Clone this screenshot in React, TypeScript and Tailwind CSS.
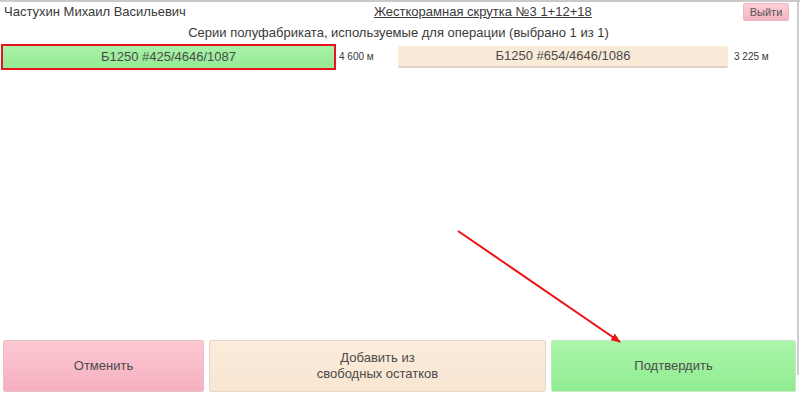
export default function App() {
  return (
    <div className="relative flex h-[395px] w-[800px] overflow-hidden border-t-2 border-[#c9c9c9] bg-white font-['Liberation_Sans',Arial,sans-serif] text-[#3a3a3a]">
      <div className="flex flex-1 flex-col">
        <div className="flex h-[19px] items-center">
          <div className="w-[374px] pl-[4px] text-[13px]">Частухин Михаил Васильевич</div>
          <div className="text-[13px] underline">Жесткорамная скрутка №3 1+12+18</div>
          <div className="flex-1" />
          <button className="mr-[8px] mt-[1px] h-[18px] w-[46px] rounded-[2px] border border-[#edb6c0] bg-gradient-to-b from-[#fccfd8] to-[#f5b3c0] text-[11px] text-[#555]">
            Выйти
          </button>
        </div>
        <div className="mt-[2px] text-center text-[13px]">
          Серии полуфабриката, используемые для операции (выбрано 1 из 1)
        </div>
        <div className="mt-[1px] flex items-center">
          <div className="ml-[1px] flex h-[26px] w-[335px] items-center justify-center border-2 border-[#e8141c] bg-gradient-to-b from-[#a8f2a8] to-[#94ea94] text-[13px] text-[#4a4a4a]">
            Б1250 #425/4646/1087
          </div>
          <div className="ml-[3px] w-[59px] text-[10px]">4 600 м</div>
          <div className="flex h-[22px] w-[330px] items-center justify-center rounded-[2px] border-b-2 border-[#ddd2c4] bg-[#faebd9] text-[13px] text-[#4a4a4a]">
            Б1250 #654/4646/1086
          </div>
          <div className="ml-[6px] text-[10px]">3 225 м</div>
        </div>
        <div className="flex-1" />
        <div className="mb-[3px] flex h-[52px] gap-[5px] pl-[3px]">
          <button className="w-[201px] rounded-[2px] border border-[#e3c2c8] bg-gradient-to-b from-[#fcc8d2] to-[#f5b0bf] text-[13px] text-[#4a4a4a]">
            Отменить
          </button>
          <button className="w-[337px] rounded-[2px] border border-[#e2d8cc] bg-gradient-to-b from-[#fbecda] to-[#f8e6d2] text-[13px] leading-[16px] text-[#4a4a4a]">
            Добавить из
            <br />
            свободных остатков
          </button>
          <button className="w-[245px] rounded-[2px] border border-[#c8e6c8] bg-gradient-to-b from-[#abf5ab] to-[#90ec90] text-[13px] text-[#4a4a4a]">
            Подтвердить
          </button>
        </div>
      </div>
      <div className="mr-[1px] h-[373px] w-[2px] bg-[#cfcfcf]" />
      <svg className="pointer-events-none absolute left-0 top-0" width="800" height="395">
        <defs>
          <marker id="ah" markerWidth="10" markerHeight="8" refX="9" refY="4" orient="auto" markerUnits="userSpaceOnUse">
            <path d="M0,0 L10,4 L0,8 Z" fill="#ee1111" />
          </marker>
        </defs>
        <line x1="458" y1="229" x2="620" y2="340" stroke="#ee1111" strokeWidth="2" markerEnd="url(#ah)" />
      </svg>
    </div>
  );
}
